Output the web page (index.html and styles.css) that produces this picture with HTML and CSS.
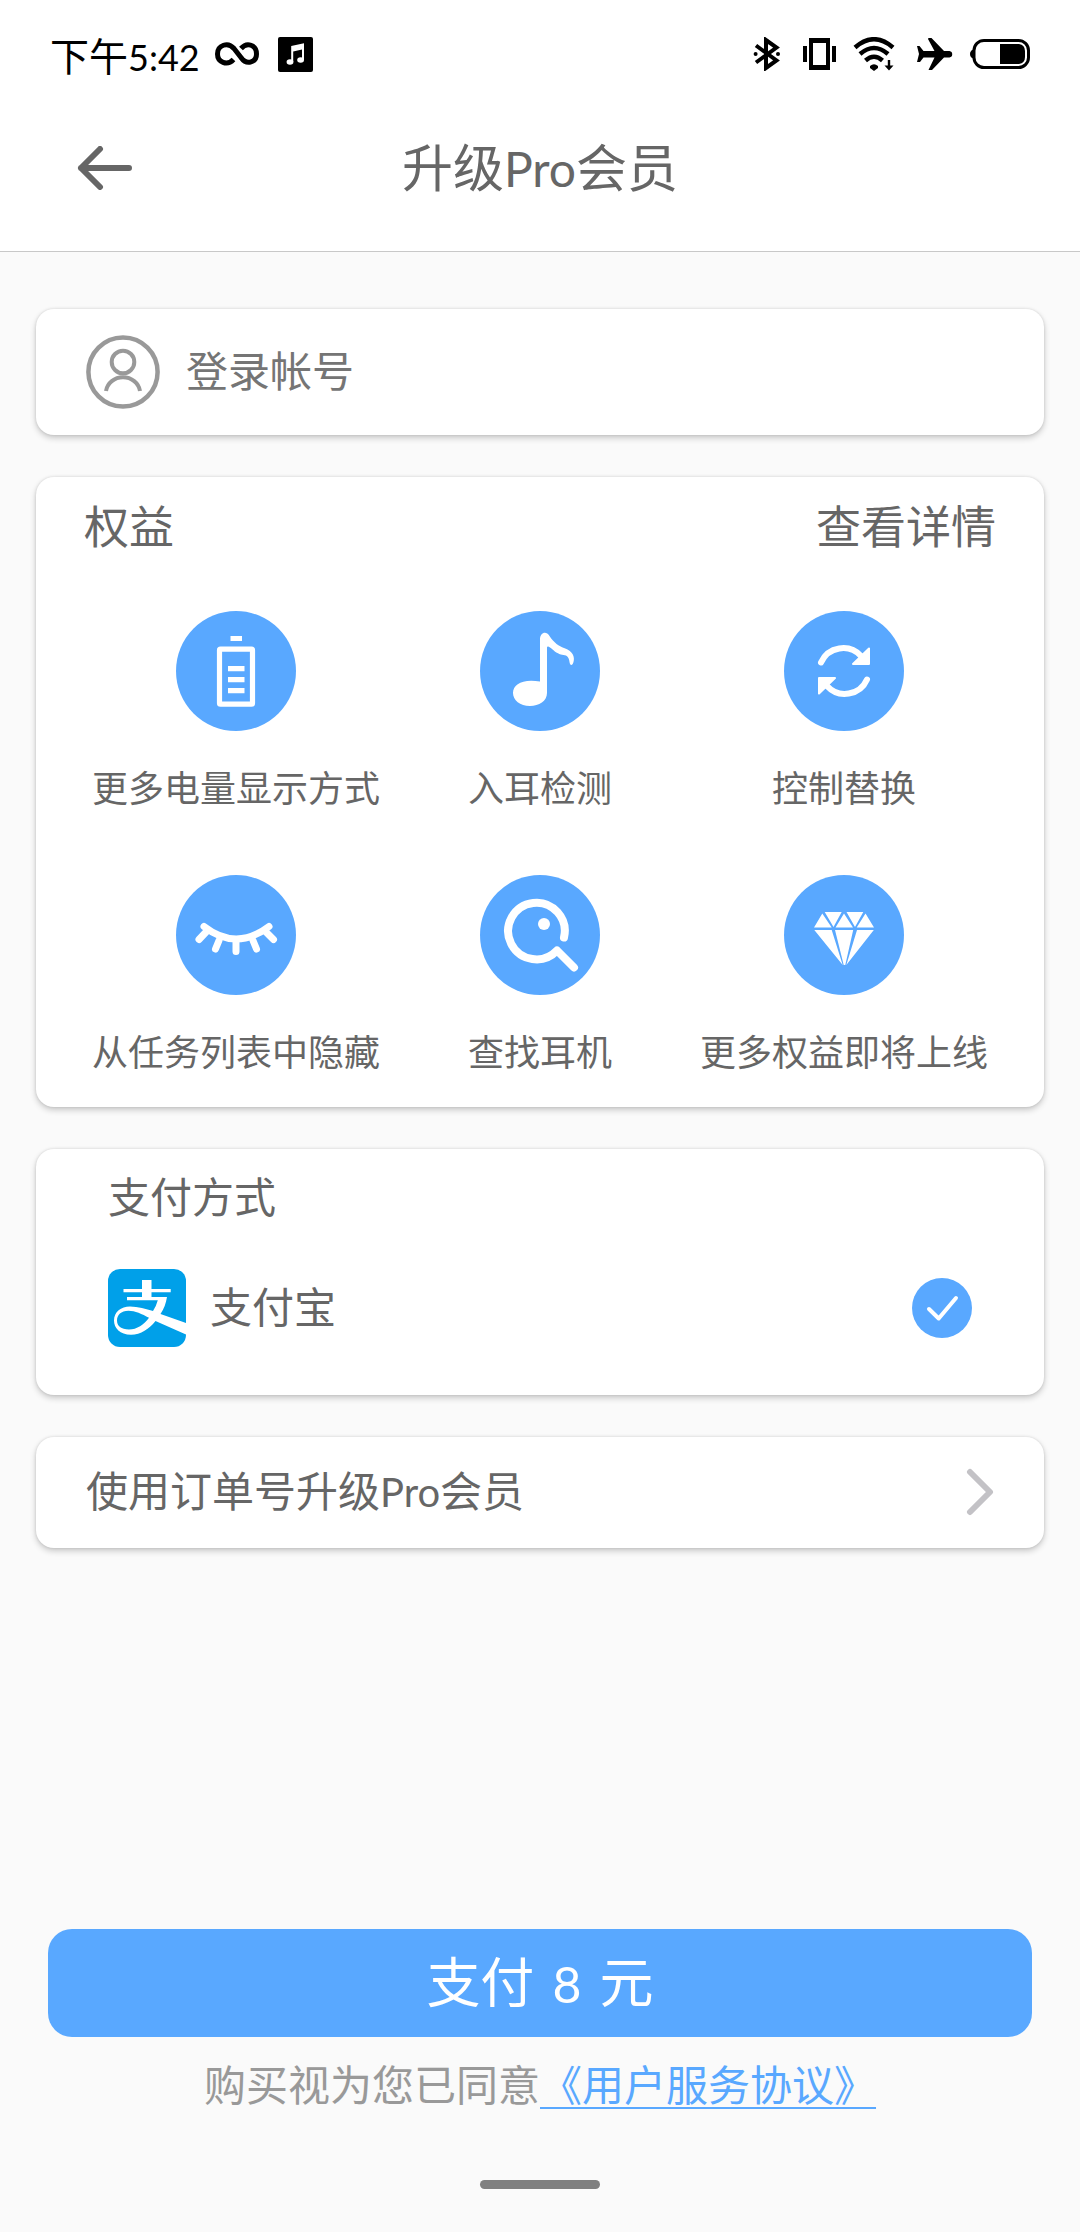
FILE: index.html
```html
<!DOCTYPE html>
<html lang="zh-CN">
<head>
<meta charset="utf-8">
<meta name="viewport" content="width=device-width, initial-scale=1">
<title>升级Pro会员</title>
<link rel="stylesheet" href="styles.css">
</head>
<body>
<div class="status-bar">
  <div class="status-group">
    <span class="clock">下午<span class="latin">5:42</span></span>
    <svg width="46" height="24" viewBox="0 0 46 24" fill="none" stroke="#000" stroke-width="5" aria-hidden="true"><path d="M18.5 17.5C12 24.500 2.500 20 2.500 12C2.500 3 13 -.5 19 6.500L26 15.500C32 24 41.500 20 41.500 12C41.500 3 32 -.5 26 6.500"/></svg>
    <svg width="35" height="35" viewBox="0 0 35 35" aria-hidden="true"><rect width="35" height="35" rx="2"/><g fill="#fff"><path d="M13.200 9L26 6.300V23H24V12.500L15.200 14.500V25H13.200Z"/><ellipse cx="12" cy="25" rx="3.400" ry="2.800"/><ellipse cx="22.600" cy="23" rx="3.400" ry="2.800"/></g></svg>
  </div>
  <div class="status-group">
    <svg width="34" height="34" viewBox="0 0 34 34" aria-hidden="true"><path d="M4 8.500L24.500 23.500L14 31V3L24.500 10.500L4 25.500" fill="none" stroke="#000" stroke-width="4"/><circle cx="3.600" cy="17" r="2"/><circle cx="26" cy="17" r="2"/></svg>
    <svg width="33" height="32" viewBox="0 0 33 32" aria-hidden="true"><path fill-rule="evenodd" d="M6 0H27V32H6ZM10 5V27H23V5Z"/><path d="M0 8H4V24H0ZM29 8H33V24H29Z"/></svg>
    <svg width="42" height="34" viewBox="0 0 42 34" aria-hidden="true"><g fill="none" stroke="#000" stroke-width="4.500"><path d="M2 10.500Q21 -6 40 10.500"/><path d="M7 17Q21 5 35 17"/><path d="M12.500 23.500Q21 16 29.500 23.500"/></g><path d="M17 29Q21 25.500 25 29V31L21 34L17 31ZM34.800 23H37.200V28.500H40.500L36 33.500L31.500 28.500H34.800Z"/></svg>
    <svg width="41" height="32" viewBox="0 0 41 32" aria-hidden="true"><path d="M5 8H7.500L11.500 13H22.500L16 1Q16 0 17 0H19.500L32 13H37.500A3.300 3.300 0 0 1 37.500 19.500H32L20 32H16.500L22.500 19.500H11.500L8 24H5L7 16Z"/></svg>
    <svg width="60" height="30" viewBox="0 0 60 30" aria-hidden="true"><rect x="4" y="1.500" width="54.500" height="27" rx="10" fill="none" stroke="#000" stroke-width="3"/><path d="M3 10.500Q0 12 0 15T3 19.500ZM30 5H49Q55 6 55 12V18Q55 24 49 25H30Z"/></svg>
  </div>
</div>
<header class="app-bar">
  <button class="back" type="button" aria-label="返回"><svg width="56" height="44" viewBox="0 0 56 44" fill="none" stroke="#666" stroke-width="6" stroke-linecap="round" stroke-linejoin="round" aria-hidden="true"><path d="M52 22H4M23 3L4 22L23 41"/></svg></button>
  <h1 class="title">升级<span class="latin">Pro</span>会员</h1>
</header>
<main class="content">
  <a class="card login" href="#login">
    <svg width="76" height="74" viewBox="0 0 76 74" fill="none" stroke="#999" aria-hidden="true"><circle cx="39" cy="37" r="34.600" stroke-width="4.500"/><circle cx="39" cy="27" r="11.300" stroke-width="4"/><path stroke-width="4" d="M22 56A17.200 16.200 0 0 1 56 56"/></svg>
    <span class="row-text">登录帐号</span>
  </a>
  <section class="card benefits">
    <div class="benefits-head">
      <h2 class="section-title">权益</h2>
      <a class="section-title" href="#details">查看详情</a>
    </div>
    <ul class="benefit-grid">
      <li class="benefit">
        <svg class="badge" viewBox="0 0 120 120" fill="#fff" aria-hidden="true"><path d="M54.500 25H66V30H54.500ZM52 55H68.500V60.300H52ZM52 66H68.500V71.300H52ZM52 77H68.500V82.300H52Z"/><rect x="43.500" y="38.200" width="33" height="55" rx="1" fill="none" stroke="#fff" stroke-width="5.200"/></svg>
        <span>更多电量显示方式</span>
      </li>
      <li class="benefit">
        <svg class="badge" viewBox="0 0 120 120" fill="#fff" aria-hidden="true"><path d="M60 70.500V28C60 22 66 19 69.500 25C74 32 79 35 84 37C93 40 95 46 93.500 51C92.500 55 90 55 89.500 51C89 45 86 44 82 43.700C76 42.500 73 38.500 70 36.500C68 35 67 35.500 67 37V82C67 90 59 95 50 95C40 95 33 89 33 82C33 73 43 67.500 60 70.500Z"/></svg>
        <span>入耳检测</span>
      </li>
      <li class="benefit">
        <svg class="badge" viewBox="0 0 120 120" aria-hidden="true"><g id="cycle" fill="none" stroke="#fff" stroke-linecap="round" stroke-linejoin="round"><path stroke-width="6" d="M37 51.500A24.200 24.200 0 0 1 77 45"/><path fill="#fff" stroke-width="2" d="M85 37.500V53H69Z"/></g><use href="#cycle" transform="rotate(180 60 60)"/></svg>
        <span>控制替换</span>
      </li>
      <li class="benefit">
        <svg class="badge" viewBox="0 0 120 120" fill="none" stroke="#fff" stroke-width="7" stroke-linecap="round" aria-hidden="true"><path d="M28 51.500Q60 76.500 93 51.500"/><path d="M31 56L23 64.500M43 65.500L39.500 74M60 65V76.500M77 65.500L80.500 74M89 56L97.500 64.500"/></svg>
        <span>从任务列表中隐藏</span>
      </li>
      <li class="benefit">
        <svg class="badge" viewBox="0 0 120 120" fill="none" stroke="#fff" stroke-width="8" stroke-linecap="round" stroke-linejoin="round" aria-hidden="true"><path d="M84 62.500A28.300 28.300 0 1 0 77 75.500L94 92.500"/><circle cx="64" cy="49" r="6" fill="#fff" stroke="none"/></svg>
        <span>查找耳机</span>
      </li>
      <li class="benefit">
        <svg class="badge" viewBox="0 0 120 120" fill="#fff" aria-hidden="true"><path d="M38.300 38.500L47.700 52.500H30ZM40.700 37H57.700L49.500 52ZM60 38.500L69 52.500H51.500ZM62.500 37H79.300L71 52ZM81.500 38.500L90 52.500H72.700ZM30.300 55H47.700L58.700 90ZM51 55H69.200L61.300 90H59.700ZM73 55H89.800L62.300 90Z"/></svg>
        <span>更多权益即将上线</span>
      </li>
    </ul>
  </section>
  <section class="card payment">
    <h2 class="payment-title">支付方式</h2>
    <label class="method">
      <svg width="78" height="78" viewBox="0 0 78 78" aria-hidden="true"><rect width="78" height="78" rx="12" fill="#00a0e9"/><path fill="#fff" fill-rule="evenodd" d="M34 11H43.500V20H62.700V23.300H43.500V28H59C58 34 56 40 52.500 45L78 54V65.500L47.500 52C41 60 33 65.700 23 65.700C12 65.700 6 59 6 51.500C6 43 13 37.500 22 37.500C30 37.500 38 40 45 42Q48.500 36.500 49.800 31.300H19V28H34V23.300H15.500V20H34ZM20.500 41.700C13 41.700 9 46 9 51.500C9 57 13 60.500 21 60.500C29 60.500 36 55.500 41 48.700C34 45 27 41.700 20.500 41.700Z"/></svg>
      <span class="method-name row-text">支付宝</span>
      <span class="check"><input class="check-input" type="radio" name="method" checked><svg class="check-mark" viewBox="0 0 60 60" fill="none" stroke="#fff" stroke-width="4" stroke-linecap="round" stroke-linejoin="round" aria-hidden="true"><path d="M17 31L26.700 40.500L44 20"/></svg></span>
    </label>
  </section>
  <a class="card order" href="#order">
    <span class="row-text">使用订单号升级<span class="latin">Pro</span>会员</span>
    <svg width="30" height="48" viewBox="0 0 30 48" fill="none" stroke="#c3c2c6" stroke-width="6" stroke-linecap="round" stroke-linejoin="round" aria-hidden="true"><path d="M6 4L26 24L6 44"/></svg>
  </a>
</main>
<footer class="footer">
  <button class="pay" type="button">支付 <span class="latin">8</span> 元</button>
  <p class="terms">购买视为您已同意<a class="terms-link" href="#terms">《用户服务协议》</a></p>
  <div class="home-handle"></div>
</footer>
</body>
</html>
```
FILE: styles.css
```css
* {
  box-sizing: border-box;
}

body {
  display: flex;
  flex-direction: column;
  min-height: 100vh;
  margin: 0;
  background: #fafafa;
  color: #666;
  font-family: "Noto Sans CJK SC", sans-serif;
  font-size: 42px;
  line-height: 60px;
}

svg {
  display: block;
  flex: none;
}

h1,
h2,
p,
ul {
  margin: 0;
  padding: 0;
  font-weight: 400;
}

a {
  color: inherit;
  text-decoration: none;
}

button {
  border: 0;
  background: none;
  font-family: inherit;
  cursor: pointer;
}

.latin {
  font-family: Lato, sans-serif;
  font-size: 40px;
  line-height: 1;
}

/* Status bar */
.status-bar {
  display: flex;
  justify-content: space-between;
  align-items: center;
  height: 108px;
  padding: 0 50px;
  background: #fff;
}

.status-group {
  display: flex;
  align-items: center;
  gap: 17px;
}

.clock {
  margin-right: -2px;
  color: #000;
  font-size: 39px;
}

.clock .latin {
  font-size: 36px;
}

/* Title bar */
.app-bar {
  display: grid;
  grid-template-columns: 1fr auto 1fr;
  align-items: center;
  padding: 27px 77px 50px;
  border-bottom: 1px solid #c8c8c8;
  background: #fff;
}

.back {
  justify-self: start;
  padding: 0;
}

.title {
  padding-bottom: 6px;
  font-size: 51px;
}

.title .latin {
  font-size: 48px;
}

/* Cards */
.content {
  display: flex;
  flex-direction: column;
  gap: 42px;
  padding: 57px 36px 42px;
}

.card {
  border-radius: 18px;
  background: #fff;
  box-shadow: 0 3px 6px rgba(0, 0, 0, 0.2), 0 0 3px rgba(0, 0, 0, 0.12);
}

.row-text {
  padding-bottom: 6px;
}

.login {
  display: flex;
  align-items: center;
  gap: 26px;
  padding: 26px 48px;
  color: #757575;
}

.benefits {
  display: flex;
  flex-direction: column;
  gap: 56px;
  padding: 18px 48px 33px;
}

.benefits-head {
  display: flex;
  justify-content: space-between;
}

.section-title {
  font-size: 45px;
}

.benefit-grid {
  display: grid;
  grid-template-columns: repeat(3, 1fr);
  row-gap: 65px;
  list-style: none;
}

.benefit {
  display: flex;
  flex-direction: column;
  align-items: center;
  gap: 31px;
  font-size: 36px;
  line-height: 48px;
  white-space: nowrap;
}

.badge {
  width: 120px;
  height: 120px;
  border-radius: 50%;
  background: #59a8ff;
}

.payment {
  display: flex;
  flex-direction: column;
  gap: 44px;
  padding: 16px 72px 48px;
}

.payment-title {
  font-size: 42px;
}

.method {
  display: flex;
  align-items: center;
  gap: 24px;
}

.method-name {
  flex: 1;
}

.check {
  display: grid;
}

.check-input,
.check-mark {
  grid-area: 1 / 1;
  width: 60px;
  height: 60px;
  margin: 0;
}

.check-input {
  appearance: none;
  border-radius: 50%;
  background: #59a8ff;
}

.check-mark {
  z-index: 1;
  pointer-events: none;
}

.order {
  display: flex;
  justify-content: space-between;
  align-items: center;
  padding: 22px 50px 23px;
}

/* Purchase area */
.footer {
  display: flex;
  flex-direction: column;
  margin-top: auto;
  padding: 0 48px 43px;
}

.pay {
  height: 108px;
  padding: 0 0 8px;
  border-radius: 24px;
  background: #59a8ff;
  color: #fff;
  font-size: 54px;
}

.pay .latin {
  margin: 0 6px;
  font-size: 50px;
}

.terms {
  margin: 16px 0 67px;
  color: #999;
  text-align: center;
}

.terms-link {
  color: #59a8ff;
  text-decoration: underline;
  text-decoration-thickness: 2px;
  text-decoration-skip-ink: none;
  text-underline-offset: 6px;
}

.home-handle {
  align-self: center;
  width: 120px;
  height: 9px;
  border-radius: 5px;
  background: #808080;
}
```
